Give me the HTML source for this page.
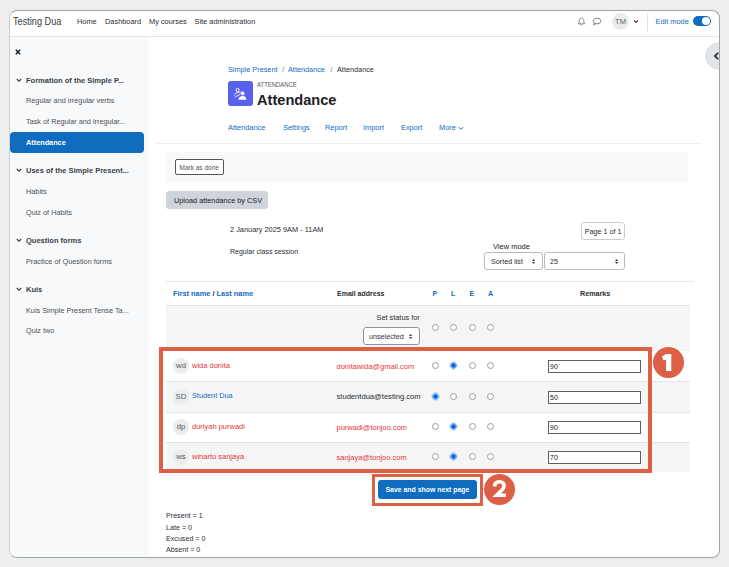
<!DOCTYPE html>
<html><head><meta charset="utf-8">
<style>
*{box-sizing:border-box;margin:0;padding:0}
html,body{width:729px;height:567px;overflow:hidden;background:#eeeeee;font-family:"Liberation Sans",sans-serif;color:#2a2e32}
.a{position:absolute;white-space:nowrap;line-height:10px;height:10px}
.b{position:absolute}
.t7{font-size:7.4px}
.bl{color:#0f6cbf}
.rd{color:#e3383a}
.bd{font-weight:bold}
.sd{color:#4d5155;font-size:7.3px}
.sh{color:#3a3e42;font-size:7.5px;font-weight:bold}
.radio{position:absolute;width:7px;height:7px;border:0.9px solid #9a9ea3;border-radius:50%;background:#fff}
.radio.on{border:none;background:radial-gradient(circle at 50% 50%,#0d5fd0 0,#0d5fd0 1.4px,#5aa2f2 2.2px,#7db6f5 3.5px,transparent 3.6px);box-shadow:0 0 0 0.7px rgba(150,195,245,0.6)}
.inp{position:absolute;left:548px;width:93px;height:13px;border:1px solid #5c6064;background:#fff;font-size:7px;line-height:11px;padding-left:1px;color:#1d2125}
.av{position:absolute;left:173px;width:16px;height:16px;border-radius:50%;background:#eaeced;font-size:7.8px;line-height:16px;text-align:center;color:#555a5e}
.hl{position:absolute;height:1px;background:#e2e3e5}
.sel{position:absolute;border:1px solid #b8bcc0;border-radius:3px;background:#fff}
.arr{position:absolute;font-size:6px;line-height:6px}
</style></head><body>
<div class="b" style="left:9px;top:10px;width:711px;height:548px;border:1px solid #9ea5a6;border-left-color:#cdd0d2;border-radius:8px;background:#fff;overflow:hidden">
</div>
<!-- header -->
<div class="b" style="left:10px;top:36px;width:709px;height:1px;background:#e2e4e6"></div>
<div class="a" style="left:12.5px;top:16.5px;font-size:10.2px;transform:scaleX(0.9);transform-origin:0 0;color:#3a3d40">Testing Dua</div>
<div class="a t7" style="left:77px;top:17px">Home</div>
<div class="a t7" style="left:105px;top:17px">Dashboard</div>
<div class="a t7" style="left:149px;top:17px">My courses</div>
<div class="a t7" style="left:194.5px;top:17px">Site administration</div>
<!-- right header icons -->
<svg class="b" style="left:577px;top:17px" width="9" height="9" viewBox="0 0 9 9"><path d="M4.5 1 C2.8 1 2.2 2.3 2.2 3.6 L2.2 5.6 L1.2 6.8 L7.8 6.8 L6.8 5.6 L6.8 3.6 C6.8 2.3 6.2 1 4.5 1 Z" fill="none" stroke="#6a6e72" stroke-width="0.8"/><path d="M3.6 7.6 Q4.5 8.6 5.4 7.6" fill="none" stroke="#6a6e72" stroke-width="0.8"/></svg>
<svg class="b" style="left:592px;top:17px" width="10" height="9" viewBox="0 0 10 9"><ellipse cx="5" cy="4" rx="3.8" ry="2.9" fill="none" stroke="#6a6e72" stroke-width="0.8"/><path d="M2.3 6 L1.6 8 L3.8 6.8" fill="none" stroke="#6a6e72" stroke-width="0.8"/></svg>
<div class="b" style="left:612px;top:13px;width:17px;height:17px;border-radius:50%;background:#e9ecef;font-size:7.5px;line-height:17px;text-align:center;color:#5a5e62">TM</div>
<svg class="b" style="left:633px;top:19px" width="6" height="5" viewBox="0 0 6 5"><path d="M1 1.5 L3 3.5 L5 1.5" fill="none" stroke="#444" stroke-width="1.1"/></svg>
<div class="b" style="left:647px;top:13px;width:1px;height:19px;background:#dee2e6"></div>
<div class="a bl" style="left:655.5px;top:17px;font-size:7.4px">Edit mode</div>
<div class="b" style="left:693px;top:16.2px;width:18px;height:10px;border-radius:5px;background:#0f6cbf"></div>
<div class="b" style="left:702px;top:17.2px;width:8px;height:8px;border-radius:50%;background:#fff"></div>

<!-- sidebar -->
<div class="b" style="left:10px;top:37px;width:138px;height:520px;background:#f8f9fa;border-bottom-left-radius:7px"></div>
<svg class="b" style="left:15px;top:49px" width="6" height="6" viewBox="0 0 6 6"><path d="M0.8 0.8 L5.2 5.2 M5.2 0.8 L0.8 5.2" stroke="#1d2125" stroke-width="1.5"/></svg>
<svg class="b" style="left:15.5px;top:78px" width="6" height="5" viewBox="0 0 6 5"><path d="M0.8 1 L3 3.3 L5.2 1" fill="none" stroke="#333" stroke-width="1.1"/></svg>
<div class="a sh" style="left:26px;top:75.8px">Formation of the Simple P...</div>
<div class="a sd" style="left:26px;top:96px">Regular and irregular verbs</div>
<div class="a sd" style="left:26px;top:116.5px">Task of Regular and irregular...</div>
<div class="b" style="left:10px;top:131.5px;width:134px;height:21px;border-radius:4px;background:#0f6cbf"></div>
<div class="a" style="left:26px;top:137.8px;font-size:7.3px;color:#fff;font-weight:bold">Attendance</div>
<svg class="b" style="left:15.5px;top:168px" width="6" height="5" viewBox="0 0 6 5"><path d="M0.8 1 L3 3.3 L5.2 1" fill="none" stroke="#333" stroke-width="1.1"/></svg>
<div class="a sh" style="left:26px;top:165.8px">Uses of the Simple Present...</div>
<div class="a sd" style="left:26px;top:187px">Habits</div>
<div class="a sd" style="left:26px;top:207.5px">Quiz of Habits</div>
<svg class="b" style="left:15.5px;top:238px" width="6" height="5" viewBox="0 0 6 5"><path d="M0.8 1 L3 3.3 L5.2 1" fill="none" stroke="#333" stroke-width="1.1"/></svg>
<div class="a sh" style="left:26px;top:235.8px">Question forms</div>
<div class="a sd" style="left:26px;top:256.5px">Practice of Question forms</div>
<svg class="b" style="left:15.5px;top:287px" width="6" height="5" viewBox="0 0 6 5"><path d="M0.8 1 L3 3.3 L5.2 1" fill="none" stroke="#333" stroke-width="1.1"/></svg>
<div class="a sh" style="left:26px;top:285.3px">Kuis</div>
<div class="a sd" style="left:26px;top:305.5px">Kuis Simple Present Tense Ta...</div>
<div class="a sd" style="left:26px;top:326px">Quiz two</div>

<!-- drawer toggle -->
<div class="b" style="left:705px;top:42px;width:14px;height:28px;overflow:hidden">
  <div class="b" style="left:0;top:0;width:28px;height:28px;border-radius:50%;background:#e3e6e9"></div>
  <svg class="b" style="left:9px;top:10px" width="5" height="8" viewBox="0 0 5 8"><path d="M4.2 0.8 L1 4 L4.2 7.2" fill="none" stroke="#1d2125" stroke-width="1.6"/></svg>
</div>

<!-- main head -->
<div class="a bl" style="left:228px;top:65px;font-size:7.3px">Simple Present</div>
<div class="a" style="left:282.3px;top:65px;font-size:7.3px;color:#6a737b">/</div>
<div class="a bl" style="left:288px;top:65px;font-size:7.3px">Attendance</div>
<div class="a" style="left:330.5px;top:65px;font-size:7.3px;color:#6a737b">/</div>
<div class="a" style="left:337px;top:65px;font-size:7.3px">Attendance</div>
<div class="b" style="left:228px;top:81px;width:25px;height:25px;border-radius:3px;background:#5861eb"></div>
<svg class="b" style="left:233px;top:87px" width="15" height="14" viewBox="0 0 15 14"><circle cx="4.6" cy="3" r="1.6" fill="none" stroke="#fff" stroke-width="0.9"/><path d="M1.4 8.6 Q1.8 5.9 4.6 5.5 L7.6 5.1" fill="none" stroke="#fff" stroke-width="0.9"/><path d="M2.2 10 L7 7.4" fill="none" stroke="#fff" stroke-width="0.9"/><circle cx="9.6" cy="6.4" r="1.9" fill="#fff"/><path d="M5.4 12.8 Q5.8 9.1 9.6 9 Q13.2 9.1 13.4 12.8 Z" fill="#fff"/></svg>
<div class="a" style="left:257px;top:79.8px;font-size:7.5px;color:#555;transform:scaleX(0.79);transform-origin:0 0">ATTENDANCE</div>
<div class="a bd" style="left:257px;top:93px;font-size:14.6px;line-height:14px;height:14px;color:#1d2125">Attendance</div>
<div class="a bl t7" style="left:228px;top:122.5px">Attendance</div>
<div class="a bl t7" style="left:283px;top:122.5px">Settings</div>
<div class="a bl t7" style="left:325px;top:122.5px">Report</div>
<div class="a bl t7" style="left:363px;top:122.5px">Import</div>
<div class="a bl t7" style="left:401px;top:122.5px">Export</div>
<div class="a bl t7" style="left:439px;top:122.5px">More</div>
<svg class="b" style="left:458px;top:125.5px" width="6" height="5" viewBox="0 0 6 5"><path d="M1 1.3 L3 3.3 L5 1.3" fill="none" stroke="#0f6cbf" stroke-width="1"/></svg>
<div class="hl" style="left:157px;top:143px;width:544px;background:#eceeef"></div>

<div class="b" style="left:166px;top:152px;width:522px;height:31px;border-radius:4px;background:#f8f9fa"></div>
<div class="b" style="left:175px;top:159px;width:49px;height:16px;border:1px solid #555;border-radius:2px;background:#fff"></div>
<div class="a" style="left:179.5px;top:162.8px;font-size:6.5px;color:#555">Mark as done</div>
<div class="b" style="left:166px;top:191px;width:102px;height:18px;border-radius:3.5px;background:#ced4da"></div>
<div class="a" style="left:174px;top:195.8px;font-size:7.3px;color:#1d2125">Upload attendance by CSV</div>

<div class="a" style="left:230px;top:224.5px;font-size:7.4px">2 January 2025 9AM - 11AM</div>
<div class="a" style="left:230px;top:247px;font-size:7px">Regular class session</div>

<div class="b" style="left:581px;top:222px;width:44px;height:18px;border:1px solid #c9ccd0;border-radius:3px;background:#fff"></div>
<div class="a" style="left:584.8px;top:226.8px;font-size:7.2px">Page 1 of 1</div>
<div class="a" style="left:493px;top:241.5px;font-size:7.5px;color:#1d2125">View mode</div>
<div class="sel" style="left:484px;top:252px;width:59px;height:18px"></div>
<div class="a" style="left:491px;top:256.6px;font-size:7.2px">Sorted list</div>
<svg class="b" style="left:531.8px;top:259px" width="3.2" height="5" viewBox="0 0 3.2 5"><path d="M1.6 0 L3.2 2.1 L0 2.1 Z M1.6 5 L3.2 2.9 L0 2.9 Z" fill="#3a3d40"/></svg>
<div class="sel" style="left:544px;top:252px;width:81px;height:18px"></div>
<div class="a" style="left:550px;top:256.6px;font-size:7.2px">25</div>
<svg class="b" style="left:615.4px;top:259px" width="3.2" height="5" viewBox="0 0 3.2 5"><path d="M1.6 0 L3.2 2.1 L0 2.1 Z M1.6 5 L3.2 2.9 L0 2.9 Z" fill="#3a3d40"/></svg>
<div class="hl" style="left:166px;top:281px;width:528px;background:#e6e8ea"></div>

<!-- table header -->
<div class="a bd" style="left:173px;top:288.7px;font-size:7.4px"><span class="bl">First name</span> / <span class="bl">Last name</span></div>
<div class="a bd" style="left:337px;top:288.7px;font-size:7px">Email address</div>
<div class="a bd bl" style="left:432.5px;top:288.7px;font-size:7px">P</div>
<div class="a bd bl" style="left:451px;top:288.7px;font-size:7px">L</div>
<div class="a bd bl" style="left:469.5px;top:288.7px;font-size:7px">E</div>
<div class="a bd bl" style="left:488px;top:288.7px;font-size:7px">A</div>
<div class="a bd" style="left:580px;top:288.7px;font-size:7.2px">Remarks</div>
<div class="hl" style="left:166px;top:305px;width:524px"></div>

<!-- set status row -->
<div class="b" style="left:166px;top:306px;width:524px;height:45px;background:#f5f5f5"></div>
<div class="a" style="left:376.5px;top:312.5px;font-size:7.35px">Set status for</div>
<div class="b" style="left:362.5px;top:327.3px;width:57.5px;height:17.7px;border:1px solid #8f959e;border-radius:3px;background:#fff"></div>
<div class="a" style="left:369px;top:331.5px;font-size:7.2px;color:#333">unselected</div>
<svg class="b" style="left:408.9px;top:333.8px" width="3.2" height="5" viewBox="0 0 3.2 5"><path d="M1.6 0 L3.2 2.1 L0 2.1 Z M1.6 5 L3.2 2.9 L0 2.9 Z" fill="#3a3d40"/></svg>
<div class="radio" style="left:431.5px;top:323.7px"></div>
<div class="radio" style="left:450px;top:323.7px"></div>
<div class="radio" style="left:468.5px;top:323.7px"></div>
<div class="radio" style="left:487px;top:323.7px"></div>

<!-- rows -->
<div class="b" style="left:166px;top:351px;width:524px;height:30px;background:#fff"></div>
<div class="hl" style="left:166px;top:381px;width:524px"></div>
<div class="b" style="left:166px;top:382px;width:524px;height:30px;background:#f5f5f5"></div>
<div class="hl" style="left:166px;top:412px;width:524px"></div>
<div class="b" style="left:166px;top:413px;width:524px;height:29px;background:#fff"></div>
<div class="hl" style="left:166px;top:442px;width:524px"></div>
<div class="b" style="left:166px;top:443px;width:524px;height:29px;background:#f5f5f5"></div>

<div class="av" style="top:358px">wd</div>
<div class="a rd" style="left:192px;top:361px;font-size:7.5px">wida donita</div>
<div class="a rd" style="left:336.5px;top:362.1px;font-size:7.5px">donitawida@gmail.com</div>
<div class="radio" style="left:431.5px;top:362px"></div>
<div class="radio on" style="left:450px;top:362px"></div>
<div class="radio" style="left:468.5px;top:362px"></div>
<div class="radio" style="left:487px;top:362px"></div>
<div class="inp" style="top:360px">90`</div>

<div class="av" style="top:388.5px">SD</div>
<div class="a bl" style="left:192px;top:391px;font-size:7.3px">Student Dua</div>
<div class="a" style="left:336.5px;top:392.1px;font-size:7.6px">studentdua@testing.com</div>
<div class="radio on" style="left:431.5px;top:392.5px"></div>
<div class="radio" style="left:450px;top:392.5px"></div>
<div class="radio" style="left:468.5px;top:392.5px"></div>
<div class="radio" style="left:487px;top:392.5px"></div>
<div class="inp" style="top:390.5px">50</div>

<div class="av" style="top:419px">dp</div>
<div class="a rd" style="left:192px;top:421.5px;font-size:7.5px">duriyah purwadi</div>
<div class="a rd" style="left:336.5px;top:422.6px;font-size:7.5px">purwadi@tonjoo.com</div>
<div class="radio" style="left:431.5px;top:423px"></div>
<div class="radio on" style="left:450px;top:423px"></div>
<div class="radio" style="left:468.5px;top:423px"></div>
<div class="radio" style="left:487px;top:423px"></div>
<div class="inp" style="top:420.5px">90</div>

<div class="av" style="top:449px">ws</div>
<div class="a rd" style="left:192px;top:451.5px;font-size:7.5px">winarto sanjaya</div>
<div class="a rd" style="left:336.5px;top:452.6px;font-size:7.5px">sanjaya@tonjoo.com</div>
<div class="radio" style="left:431.5px;top:453px"></div>
<div class="radio on" style="left:450px;top:453px"></div>
<div class="radio" style="left:468.5px;top:453px"></div>
<div class="radio" style="left:487px;top:453px"></div>
<div class="inp" style="top:450.5px">70</div>

<!-- annotation 1 -->
<div class="b" style="left:159px;top:347px;width:493px;height:126px;border:4.3px solid #dc5f46"></div>
<div class="b" style="left:652.5px;top:346.5px;width:31.2px;height:31.2px;border-radius:50%;background:#dc5f46"></div>


<!-- save button -->
<div class="b" style="left:372px;top:474px;width:111px;height:32px;border:3.5px solid #dc5f46"></div>
<div class="b" style="left:378px;top:480px;width:98.5px;height:19px;border-radius:3px;background:#0f6cbf"></div>
<div class="a bd" style="left:385.5px;top:485px;font-size:6.9px;color:#fff">Save and show next page</div>
<div class="b" style="left:483.5px;top:474px;width:31.2px;height:31.2px;border-radius:50%;background:#dc5f46"></div>


<div class="a" style="left:166px;top:511px;font-size:7.15px">Present = 1</div>
<div class="a" style="left:166px;top:522.6px;font-size:7.15px">Late = 0</div>
<div class="a" style="left:166px;top:534px;font-size:7.15px">Excused = 0</div>
<div class="a" style="left:166px;top:545px;font-size:7.15px">Absent = 0</div>
<svg class="b" style="left:0;top:0" width="729" height="567"><path d="M666.1 353.9 L671.3 353.9 L671.3 371 L666.1 371 L666.1 359.6 L663.6 360.6 L661.9 356.4 Z" fill="#fff"/><path d="M494.6 486.6 C494.6 482.8 496.8 481.7 499.4 481.7 C502.2 481.7 504.1 483.3 504.1 486 C504.1 488 503 489.3 501.4 490.6 L496.6 495.3 L505.9 495.3" fill="none" stroke="#fff" stroke-width="3.6" stroke-linejoin="miter"/></svg>
</body></html>
